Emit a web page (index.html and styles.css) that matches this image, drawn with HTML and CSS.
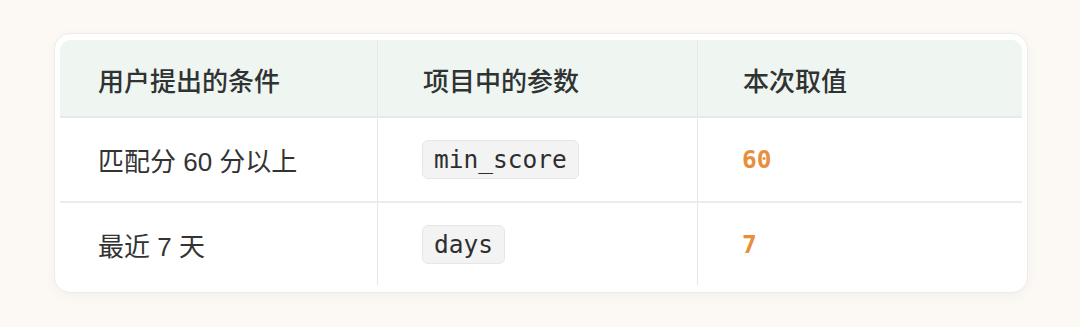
FILE: index.html
```html
<!DOCTYPE html>
<html lang="zh">
<head>
<meta charset="utf-8">
<link rel="stylesheet" href="styles.css">
</head>
<body>
<div class="page">
  <div class="card">
    <div class="table">
      <div class="cell head first">用户提出的条件</div>
      <div class="cell head mid">项目中的参数</div>
      <div class="cell head last">本次取值</div>

      <div class="cell row first">匹配分 60 分以上</div>
      <div class="cell row mid"><code class="pill">min_score</code></div>
      <div class="cell row last"><span class="val">60</span></div>

      <div class="cell row end first">最近 7 天</div>
      <div class="cell row end mid"><code class="pill">days</code></div>
      <div class="cell row end last"><span class="val">7</span></div>
    </div>
  </div>
</div>
</body>
</html>
```

FILE: styles.css
```css
html, body {
  margin: 0;
  padding: 0;
  background: #fcf9f5;
}
body {
  width: 1080px;
  height: 327px;
  overflow: hidden;
  font-family: "Liberation Sans", "Noto Sans CJK SC", sans-serif;
  color: #333333;
}
.page {
  padding: 33px 0 0 54px;
}
.card {
  box-sizing: border-box;
  width: 974px;
  height: 260px;
  background: #ffffff;
  border: 1px solid #efebe6;
  border-radius: 16px;
  box-shadow: 0 3px 10px rgba(120, 100, 80, 0.06);
  padding: 6px 5px 7px 5px;
}
.table {
  display: grid;
  grid-template-columns: 317px 320px 1fr;
  grid-template-rows: 78px 85px 82px;
}
.cell {
  box-sizing: border-box;
  display: flex;
  align-items: center;
  font-size: 26px;
}
.head {
  background: #eff5f1;
  border-bottom: 2px solid #e7eae8;
  font-weight: 500;
  padding-top: 2px;
  color: #2f3333;
}
.row {
  border-bottom: 2px solid #ececec;
}
.row.end {
  border-bottom: none;
}
.first {
  padding-left: 38px;
}
.head.first {
  border-top-left-radius: 10px;
}
.head.last {
  border-top-right-radius: 10px;
}
.mid, .last {
  padding-left: 44px;
  border-left: 1px solid #e6e8e7;
}
.head.mid, .head.last {
  padding-left: 45px;
}
.pill {
  font-family: "DejaVu Sans Mono", monospace;
  font-size: 24.5px;
  line-height: 29px;
  padding: 4px 11px;
  background: #f3f3f3;
  border: 1px solid #e6e6e6;
  border-radius: 6px;
  color: #2e2e2e;
}
.val {
  font-family: "DejaVu Sans Mono", monospace;
  font-size: 24.5px;
  font-weight: 700;
  color: #e88f3d;
}
```
